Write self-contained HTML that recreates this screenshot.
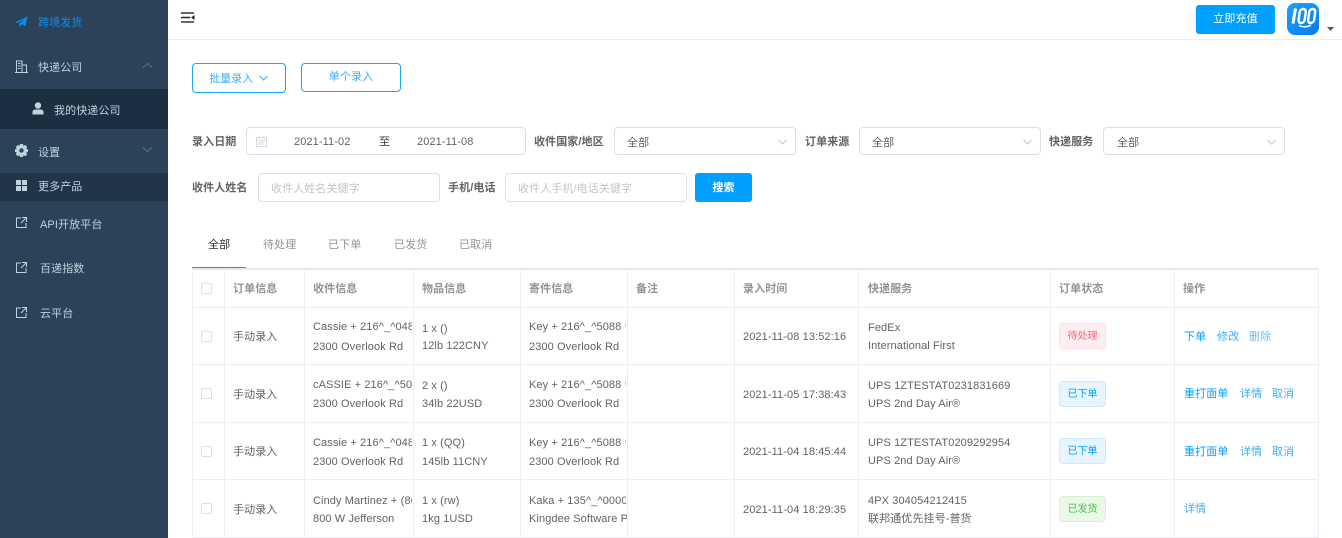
<!DOCTYPE html>
<html lang="zh"><head><meta charset="utf-8"><style>
*{box-sizing:border-box}
html,body{margin:0;padding:0;width:1342px;height:538px;overflow:hidden;background:#fff}
body{position:relative;font:11px/18px "Liberation Sans","WenQuanYi Zen Hei","Noto Sans CJK SC",sans-serif;letter-spacing:.1px;color:#606266}
.a,.t{position:absolute}
.t{white-space:nowrap;height:18px;line-height:18px}
.s{color:#bfd2de}
.b{font-weight:bold}
.box{position:absolute;border:1px solid #dcdfe6;border-radius:4px;background:#fff}
.ph{color:#c0c4cc}
.h{position:absolute;left:192px;width:1127px;height:1px;background:#ebeef5}
.v{position:absolute;top:269px;width:1px;height:269px;background:#ebeef5}
.th{color:#909399;font-weight:bold}
.cb{position:absolute;left:201px;width:11px;height:11px;border:1px solid #dcdfe6;border-radius:2px;background:#fff}
.l{color:#00a0ff}
.tag{position:absolute;left:1059px;width:47px;height:26px;border-radius:4px;line-height:26px;text-align:center;border:1px solid;font-size:10px;letter-spacing:0}
.red{background:#ffeef0;border-color:#ffdde1;color:#ff6478}
.blue{background:#e6f5ff;border-color:#cce9ff;color:#00a0ff}
.green{background:#ebf8e8;border-color:#d6f1d2;color:#3cc34a}
.clip{position:absolute;overflow:hidden;white-space:nowrap;height:18px;line-height:18px}
svg{position:absolute;display:block}
</style></head><body>
<div class="a" style="left:0;top:0;width:168px;height:538px;background:#2b4258"></div>
<div class="a" style="left:0;top:89px;width:168px;height:40px;background:#1c2f40"></div>
<div class="a" style="left:0;top:173px;width:168px;height:28px;background:#223548"></div>

<svg style="left:15px;top:16px" width="13" height="12" viewBox="0 0 13 12"><path d="M0 6.500L12.500 0.500L10.500 10L6.800 8.200L5 11.500L4.200 7.500L10.500 2.500L3 6.900Z" fill="#0a8cf0"/></svg>
<div class="t" style="left:38px;top:14px;color:#0a8cf0">跨境发货</div>

<svg style="left:15px;top:60px" width="13" height="13" viewBox="0 0 13 13" fill="none" stroke="#bfd2de"><path d="M1.500 12V1H7V12M7 5H11.500V12M0 12.500H13M3 3.500H5.500M3 6H5.500M3 8.500H5.500" /></svg>
<div class="t s" style="left:38px;top:59px">快递公司</div>
<svg style="left:142px;top:62px" width="11" height="7" viewBox="0 0 11 7" fill="none" stroke="#5d7488"><path d="M1 5.500L5.500 1.500L10 5.500"/></svg>

<svg style="left:32px;top:102px" width="12" height="13" viewBox="0 0 12 13" fill="#bfd2de"><circle cx="6" cy="3.500" r="3.200"/><path d="M0.500 12.500V10C0.500 8.500 2 7.500 3.500 7.500H8.500C10 7.500 11.500 8.500 11.500 10V12.500Z"/></svg>
<div class="t s" style="left:54px;top:102px">我的快递公司</div>

<svg style="left:15px;top:144px" width="13" height="13" viewBox="0 0 13 13"><path fill-rule="evenodd" fill="#bfd2de" d="M5 0H8L8.400 1.800L10.200 1L12.200 3L11.200 4.800L13 5.200V8L11.200 8.400L12.200 10.200L10.200 12.200L8.400 11.200L8 13H5L4.600 11.200L2.800 12.200L0.800 10.200L1.800 8.400L0 8V5.200L1.800 4.800L0.800 3L2.800 1L4.600 1.800ZM6.500 4.300A2.200 2.200 0 1 0 6.500 8.700A2.200 2.200 0 1 0 6.500 4.300Z"/></svg>
<div class="t s" style="left:38px;top:144px">设置</div>
<svg style="left:142px;top:146px" width="11" height="7" viewBox="0 0 11 7" fill="none" stroke="#5d7488"><path d="M1 1.500L5.500 5.500L10 1.500"/></svg>

<svg style="left:16px;top:180px" width="11" height="11" viewBox="0 0 11 11" fill="#bfd2de"><rect width="5" height="5"/><rect x="6" width="5" height="5"/><rect y="6" width="5" height="5"/><rect x="6" y="6" width="5" height="5"/></svg>
<div class="t s" style="left:38px;top:178px">更多产品</div>

<svg style="left:16px;top:217px" width="11" height="11" viewBox="0 0 11 11" fill="none" stroke="#bfd2de"><path d="M5 1H0.500V10.500H10V6M6 0.500H10.500V5M10.500 0.500L5 6"/></svg>
<div class="t s" style="left:40px;top:216px">API开放平台</div>
<svg style="left:16px;top:262px" width="11" height="11" viewBox="0 0 11 11" fill="none" stroke="#bfd2de"><path d="M5 1H0.500V10.500H10V6M6 0.500H10.500V5M10.500 0.500L5 6"/></svg>
<div class="t s" style="left:40px;top:260px">百递指数</div>
<svg style="left:16px;top:307px" width="11" height="11" viewBox="0 0 11 11" fill="none" stroke="#bfd2de"><path d="M5 1H0.500V10.500H10V6M6 0.500H10.500V5M10.500 0.500L5 6"/></svg>
<div class="t s" style="left:40px;top:305px">云平台</div>

<div class="a" style="left:168px;top:39px;width:1174px;height:1px;background:#eeeeee"></div>
<svg style="left:181px;top:12px" width="14" height="11" viewBox="0 0 14 11"><path d="M0 1H13" stroke="#666" stroke-width="2" fill="none"/><path d="M0 5.500H9" stroke="#222" stroke-width="1.500" fill="none"/><path d="M0 10H13" stroke="#666" stroke-width="2" fill="none"/><path d="M13.500 3V8L10 5.500Z" fill="#222"/></svg>
<div class="a" style="left:1196px;top:5px;width:79px;height:29px;background:#00a0ff;border-radius:3px;color:#fff;text-align:center;line-height:29px">立即充值</div>
<div class="a" style="left:1287px;top:3px;width:32px;height:32px;border-radius:8px;background:linear-gradient(135deg,#1aa2ff,#0a78ec)"></div>
<svg style="left:1287px;top:3px" width="32" height="32" viewBox="0 0 32 32" fill="none" stroke="#fff"><path d="M8.500 5.500L6 20.500" stroke-width="3"/><rect x="14" y="6" width="6" height="14" rx="3" stroke-width="2.400" transform="skewX(-8)"/><rect x="23.500" y="6" width="6" height="14" rx="3" stroke-width="2.400" transform="skewX(-8)"/><path d="M12 22.500Q18 25.500 24 22" stroke-width="1.500"/></svg>
<svg style="left:1327px;top:27px" width="7" height="4" viewBox="0 0 7 4"><path d="M0 0H7L3.500 4Z" fill="#555"/></svg>

<div class="box" style="left:192px;top:63px;width:94px;height:30px;border-color:#1ba6f4"></div>
<div class="t l" style="left:209px;top:70px;color:#3aaef8">批量录入</div>
<svg style="left:259px;top:75px" width="9" height="6" viewBox="0 0 9 6" fill="none" stroke="#3aaef8"><path d="M0.500 1L4.500 5L8.500 1"/></svg>
<div class="box" style="left:301px;top:63px;width:100px;height:29px;border-color:#1ba6f4;color:#3aaef8;text-align:center;line-height:26px">单个录入</div>

<div class="t b" style="left:192px;top:133px">录入日期</div>
<div class="box" style="left:246px;top:127px;width:280px;height:28px"></div>
<svg style="left:256px;top:136px" width="11" height="11" viewBox="0 0 11 11" fill="none" stroke="#d5d8de"><path d="M0.500 1.500H10.500V10.500H0.500ZM0.500 4H10.500M3 0V2M8 0V2M2.500 6H8.500M2.500 8H8.500"/></svg>
<div class="t" style="left:294px;top:133px">2021-11-02</div>
<div class="t" style="left:379px;top:133px;color:#303133">至</div>
<div class="t" style="left:417px;top:133px">2021-11-08</div>

<div class="t b" style="left:534px;top:133px">收件国家/地区</div>
<div class="box" style="left:614px;top:127px;width:182px;height:28px"></div>
<div class="t" style="left:627px;top:134px">全部</div>
<svg style="left:778px;top:139px" width="9" height="6" viewBox="0 0 9 6" fill="none" stroke="#c0c4cc"><path d="M0.500 1L4.500 5L8.500 1"/></svg>

<div class="t b" style="left:805px;top:133px">订单来源</div>
<div class="box" style="left:859px;top:127px;width:182px;height:28px"></div>
<div class="t" style="left:872px;top:134px">全部</div>
<svg style="left:1023px;top:139px" width="9" height="6" viewBox="0 0 9 6" fill="none" stroke="#c0c4cc"><path d="M0.500 1L4.500 5L8.500 1"/></svg>

<div class="t b" style="left:1049px;top:133px">快递服务</div>
<div class="box" style="left:1103px;top:127px;width:182px;height:28px"></div>
<div class="t" style="left:1117px;top:134px">全部</div>
<svg style="left:1267px;top:139px" width="9" height="6" viewBox="0 0 9 6" fill="none" stroke="#c0c4cc"><path d="M0.500 1L4.500 5L8.500 1"/></svg>

<div class="t b" style="left:192px;top:179px">收件人姓名</div>
<div class="box" style="left:258px;top:173px;width:182px;height:29px"></div>
<div class="t ph" style="left:271px;top:180px">收件人姓名关键字</div>
<div class="t b" style="left:448px;top:179px">手机/电话</div>
<div class="box" style="left:505px;top:173px;width:182px;height:29px"></div>
<div class="t ph" style="left:518px;top:180px">收件人手机/电话关键字</div>
<div class="a" style="left:695px;top:173px;width:57px;height:29px;background:#00a0ff;border-radius:3px;color:#fff;text-align:center;line-height:31px;font-weight:bold">搜索</div>

<div class="t" style="left:208px;top:236px;color:#303133">全部</div>
<div class="t" style="left:263px;top:236px;color:#909399">待处理</div>
<div class="t" style="left:328px;top:236px;color:#909399">已下单</div>
<div class="t" style="left:394px;top:236px;color:#909399">已发货</div>
<div class="t" style="left:459px;top:236px;color:#909399">已取消</div>
<div class="a" style="left:192px;top:268px;width:1127px;height:2px;background:#e4e7ed"></div>
<div class="a" style="left:192px;top:267px;width:54px;height:1px;background:#00a0ff"></div>

<div class="h" style="top:307px"></div><div class="h" style="top:364px"></div><div class="h" style="top:422px"></div><div class="h" style="top:479px"></div><div class="h" style="top:537px"></div>
<div class="v" style="left:192px"></div><div class="v" style="left:224px"></div><div class="v" style="left:304px"></div><div class="v" style="left:413px"></div><div class="v" style="left:520px"></div><div class="v" style="left:627px"></div><div class="v" style="left:734px"></div><div class="v" style="left:858px"></div><div class="v" style="left:1050px"></div><div class="v" style="left:1174px"></div><div class="v" style="left:1318px"></div>

<div class="cb" style="top:283px"></div>
<div class="t th" style="left:233px;top:280px">订单信息</div>
<div class="t th" style="left:313px;top:280px">收件信息</div>
<div class="t th" style="left:422px;top:280px">物品信息</div>
<div class="t th" style="left:529px;top:280px">寄件信息</div>
<div class="t th" style="left:636px;top:280px">备注</div>
<div class="t th" style="left:743px;top:280px">录入时间</div>
<div class="t th" style="left:868px;top:280px">快递服务</div>
<div class="t th" style="left:1059px;top:280px">订单状态</div>
<div class="t th" style="left:1183px;top:280px">操作</div>

<div class="cb" style="top:331px"></div>
<div class="t" style="left:233px;top:328px">手动录入</div>
<div class="clip" style="left:313px;top:318px;width:99px">Cassie + 216^_^0488</div>
<div class="t" style="left:313px;top:338px">2300 Overlook Rd</div>
<div class="t" style="left:422px;top:320px">1 x ()</div>
<div class="t" style="left:422px;top:337px">12lb 122CNY</div>
<div class="clip" style="left:529px;top:318px;width:97px">Key + 216^_^5088 会员</div>
<div class="t" style="left:529px;top:338px">2300 Overlook Rd</div>
<div class="t" style="left:743px;top:328px">2021-11-08 13:52:16</div>
<div class="t" style="left:868px;top:319px">FedEx</div>
<div class="t" style="left:868px;top:337px">International First</div>
<div class="tag red" style="top:323px">待处理</div>
<div class="t l" style="left:1184px;top:328px">下单</div>
<div class="t" style="left:1217px;top:328px;color:#3aaef8">修改</div>
<div class="t" style="left:1249px;top:328px;color:#6fbcf8">删除</div>

<div class="cb" style="top:388px"></div>
<div class="t" style="left:233px;top:386px">手动录入</div>
<div class="clip" style="left:313px;top:376px;width:99px">cASSIE + 216^_^5088</div>
<div class="t" style="left:313px;top:395px">2300 Overlook Rd</div>
<div class="t" style="left:422px;top:377px">2 x ()</div>
<div class="t" style="left:422px;top:395px">34lb 22USD</div>
<div class="clip" style="left:529px;top:376px;width:97px">Key + 216^_^5088 会员</div>
<div class="t" style="left:529px;top:395px">2300 Overlook Rd</div>
<div class="t" style="left:743px;top:386px">2021-11-05 17:38:43</div>
<div class="t" style="left:868px;top:377px">UPS 1ZTESTAT0231831669</div>
<div class="t" style="left:868px;top:395px">UPS 2nd Day Air®</div>
<div class="tag blue" style="top:381px">已下单</div>
<div class="t l" style="left:1184px;top:385px">重打面单</div>
<div class="t" style="left:1240px;top:385px;color:#3aaef8">详情</div>
<div class="t" style="left:1272px;top:385px;color:#3aaef8">取消</div>

<div class="cb" style="top:446px"></div>
<div class="t" style="left:233px;top:443px">手动录入</div>
<div class="clip" style="left:313px;top:434px;width:99px">Cassie + 216^_^0488</div>
<div class="t" style="left:313px;top:453px">2300 Overlook Rd</div>
<div class="t" style="left:422px;top:434px">1 x (QQ)</div>
<div class="t" style="left:422px;top:453px">145lb 11CNY</div>
<div class="clip" style="left:529px;top:434px;width:97px">Key + 216^_^5088 会员</div>
<div class="t" style="left:529px;top:453px">2300 Overlook Rd</div>
<div class="t" style="left:743px;top:443px">2021-11-04 18:45:44</div>
<div class="t" style="left:868px;top:434px">UPS 1ZTESTAT0209292954</div>
<div class="t" style="left:868px;top:452px">UPS 2nd Day Air®</div>
<div class="tag blue" style="top:438px">已下单</div>
<div class="t l" style="left:1184px;top:443px">重打面单</div>
<div class="t" style="left:1240px;top:443px;color:#3aaef8">详情</div>
<div class="t" style="left:1272px;top:443px;color:#3aaef8">取消</div>

<div class="cb" style="top:503px"></div>
<div class="t" style="left:233px;top:501px">手动录入</div>
<div class="clip" style="left:313px;top:492px;width:99px">Cindy Martinez + (86)</div>
<div class="t" style="left:313px;top:510px">800 W Jefferson</div>
<div class="t" style="left:422px;top:492px">1 x (rw)</div>
<div class="t" style="left:422px;top:510px">1kg 1USD</div>
<div class="clip" style="left:529px;top:492px;width:97px">Kaka + 135^_^00000</div>
<div class="clip" style="left:529px;top:510px;width:98px">Kingdee Software P</div>
<div class="t" style="left:743px;top:501px">2021-11-04 18:29:35</div>
<div class="t" style="left:868px;top:492px">4PX 304054212415</div>
<div class="t" style="left:868px;top:510px">联邦通优先挂号-普货</div>
<div class="tag green" style="top:496px">已发货</div>
<div class="t" style="left:1184px;top:500px;color:#3aaef8">详情</div>
</body></html>
